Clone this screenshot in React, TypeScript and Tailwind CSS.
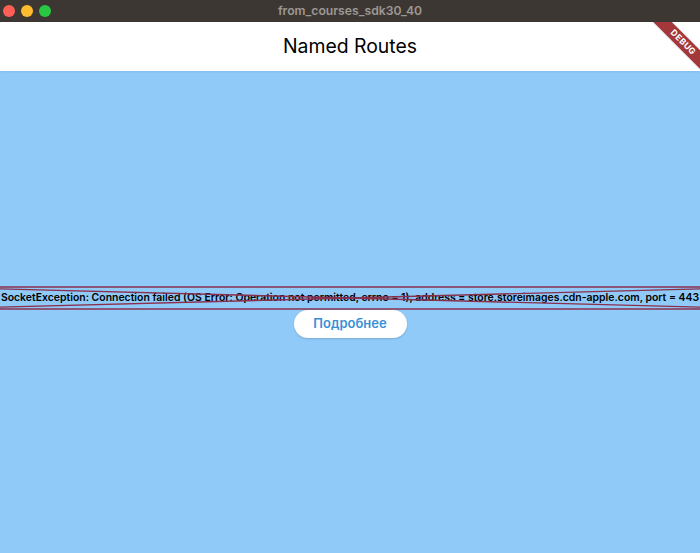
const errorText =
  "SocketException: Connection failed (OS Error: Operation not permitted, errno = 1), address = store.storeimages.cdn-apple.com, port = 443";

const TrafficLights = () => (
  <div className="absolute left-[3px] top-0 flex h-[22px] items-center gap-[6px]">
    <span className="h-[12px] w-[12px] rounded-full bg-[#fe5f57]" />
    <span className="h-[12px] w-[12px] rounded-full bg-[#febc2e]" />
    <span className="h-[12px] w-[12px] rounded-full bg-[#28c840]" />
  </div>
);

const DebugBanner = () => (
  <div className="pointer-events-none absolute right-0 top-0 h-[60px] w-[60px] overflow-hidden">
    <div className="absolute left-[3px] top-[14px] flex h-[13px] w-[80px] rotate-45 items-center justify-center bg-[#a3373a] text-[8.5px] font-bold tracking-[0.4px] text-white shadow-[0_0_2px_rgba(0,0,0,0.25)]">
      DEBUG
    </div>
  </div>
);

const BrokenImage = () => (
  <div className="relative flex h-[24px] w-full items-center justify-center overflow-hidden">
    <span className="whitespace-nowrap text-[10.45px] font-semibold text-black">
      {errorText}
    </span>
    <svg
      className="absolute left-0 top-0 h-[24px] w-[700px]"
      viewBox="0 0 700 24"
      preserveAspectRatio="none"
    >
      <g stroke="#8a2f4c" strokeWidth="1.4" fill="none">
        <line x1="-70" y1="1" x2="770" y2="1" />
        <line x1="-70" y1="23" x2="770" y2="23" />
        <line x1="-70" y1="1" x2="770" y2="23" />
        <line x1="-70" y1="23" x2="770" y2="1" />
      </g>
    </svg>
  </div>
);

export default function App() {
  return (
    <div className="flex h-[553px] w-[700px] flex-col overflow-hidden bg-[#90caf9] font-['Inter','Liberation_Sans',sans-serif]">
      <div className="relative flex h-[22px] shrink-0 items-center justify-center bg-[#3c3733]">
        <TrafficLights />
        <span className="text-[12.2px] font-semibold text-[#9d9893]">from_courses_sdk30_40</span>
      </div>
      <div className="relative flex h-[49px] shrink-0 items-center justify-center bg-white shadow-[0_1px_2px_rgba(0,0,0,0.08)]">
        <span className="text-[19.4px] text-black">Named Routes</span>
        <DebugBanner />
      </div>
      <div className="flex flex-1 flex-col items-center justify-center">
        <BrokenImage />
        <button className="h-[28px] w-[113px] rounded-full bg-white text-[13px] font-semibold text-[#3a8fd6] shadow-[0_1px_2px_rgba(0,0,0,0.15)]">
          Подробнее
        </button>
      </div>
    </div>
  );
}
